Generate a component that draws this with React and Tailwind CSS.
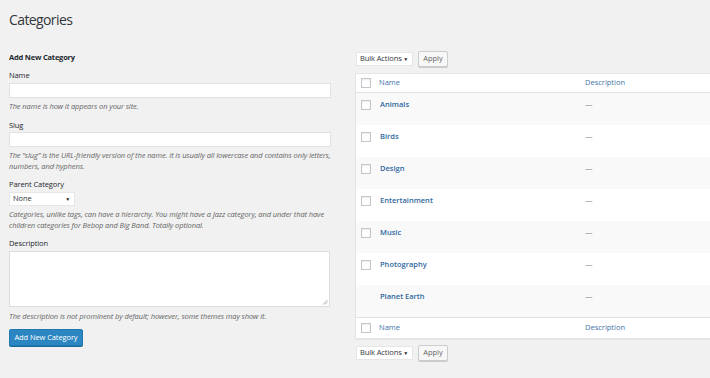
import React from "react";

const font = { fontFamily: '"Open Sans", "Noto Sans", Arial, sans-serif' };

function Checkbox() {
  return <span className="block h-[10px] w-[10px] border border-[#c3c7cb] bg-white shadow-[inset_0_1px_2px_rgba(0,0,0,0.08)]" />;
}

function Select({ label, w }) {
  return (
    <div className={`flex h-[14px] items-center justify-between whitespace-nowrap border border-[#e6e6e6] bg-white pl-[3px] pr-[4px] text-[7.5px] tracking-[-0.1px] text-[#32373c] ${w}`}>
      <span>{label}</span>
      <span className="text-[5px] leading-none text-[#222]">▼</span>
    </div>
  );
}

function BulkRow() {
  return (
    <div className="flex h-[16px] items-center gap-[5px] pl-[1px]">
      <Select label="Bulk Actions" w="w-[57px]" />
      <button className="flex h-[16px] w-[30px] items-center justify-center rounded-[2px] border border-[#cccccc] bg-[#f7f7f7] text-[7.5px] text-[#666] shadow-[0_1px_0_#cccccc]">
        Apply
      </button>
    </div>
  );
}

const rows = [
  { name: "Animals", cb: true },
  { name: "Birds", cb: true },
  { name: "Design", cb: true },
  { name: "Entertainment", cb: true },
  { name: "Music", cb: true },
  { name: "Photography", cb: true },
  { name: "Planet Earth", cb: false },
];

export default function App() {
  return (
    <div className="h-[378px] w-[710px] overflow-hidden bg-[#f1f1f1] text-[#23282d]" style={font}>
      <h1 className="mt-[10px] pl-[9px] text-[14px] leading-[20px] font-normal tracking-[-0.6px] text-[#32373c]">Categories</h1>
      <div className="mt-[21px] flex gap-[24px] pl-[9px]">
        <div className="flex w-[322px] flex-none flex-col text-[7.5px] tracking-[-0.1px]">
          <h2 className="text-[7.5px] leading-[12px] font-bold tracking-[-0.2px]">Add New Category</h2>
          <div className="mt-[7px] leading-[11px]">Name</div>
          <div className="mt-[2px] h-[15px] border border-[#e2e2e2] bg-white" />
          <p className="mt-[3px] leading-[11px] italic text-[#666]">The name is how it appears on your site.</p>
          <div className="mt-[8px] leading-[11px]">Slug</div>
          <div className="mt-[1px] h-[15px] border border-[#e2e2e2] bg-white" />
          <p className="mt-[3px] leading-[11px] italic text-[#666]">
            The &ldquo;slug&rdquo; is the URL-friendly version of the name. It is usually all lowercase and contains only letters, numbers, and hyphens.
          </p>
          <div className="mt-[7px] leading-[11px]">Parent Category</div>
          <div className="mt-[2px]">
            <Select label="None" w="w-[66px]" />
          </div>
          <p className="mt-[3px] leading-[11px] italic text-[#666]">
            Categories, unlike tags, can have a hierarchy. You might have a Jazz category, and under that have children categories for Bebop and Big Band. Totally optional.
          </p>
          <div className="mt-[7px] leading-[11px]">Description</div>
          <div className="relative mt-[2px] h-[56px] w-[321px] border border-[#dddddd] bg-white">
            <svg className="absolute right-[1px] bottom-[1px]" width="6" height="6" viewBox="0 0 6 6">
              <path d="M1 5.5L5.5 1M3 5.5L5.5 3" stroke="#999" strokeWidth="0.7" />
            </svg>
          </div>
          <p className="mt-[4px] leading-[11px] italic text-[#666]">The description is not prominent by default; however, some themes may show it.</p>
          <div className="mt-[7px]">
            <button className="flex h-[17px] w-[74px] items-center justify-center whitespace-nowrap rounded-[2px] border border-[#1f78b0] bg-[#2b86c1] text-[7.5px] text-white shadow-[0_1px_0_#1c6a9c]">
              Add New Category
            </button>
          </div>
        </div>
        <div className="flex w-[400px] flex-none flex-col">
          <BulkRow />
          <div className="mt-[6px] border border-[#e5e5e5] bg-white text-[7.5px] shadow-[0_1px_1px_rgba(0,0,0,0.04)]">
            <div className="flex h-[19px] items-center border-b border-[#e1e1e1]">
              <div className="w-[23px] pl-[5px]"><Checkbox /></div>
              <div className="w-[206px] text-[#3f74aa]">Name</div>
              <div className="text-[#3f74aa]">Description</div>
            </div>
            {rows.map((r, i) => (
              <div key={r.name} className={`flex h-[32px] items-start ${i % 2 === 0 ? "bg-[#f9f9f9]" : "bg-white"}`}>
                <div className="w-[24px] pt-[7px] pl-[5px]">{r.cb && <Checkbox />}</div>
                <div className="w-[205px] pt-[5px] leading-[12px] font-semibold text-[#2f68a0]">{r.name}</div>
                <div className="pt-[5px] leading-[12px] text-[#888]">—</div>
              </div>
            ))}
            <div className="flex h-[21px] items-center border-t border-[#e1e1e1]">
              <div className="w-[23px] pl-[5px]"><Checkbox /></div>
              <div className="w-[206px] text-[#3f74aa]">Name</div>
              <div className="text-[#3f74aa]">Description</div>
            </div>
          </div>
          <div className="mt-[6px]">
            <BulkRow />
          </div>
        </div>
      </div>
    </div>
  );
}
